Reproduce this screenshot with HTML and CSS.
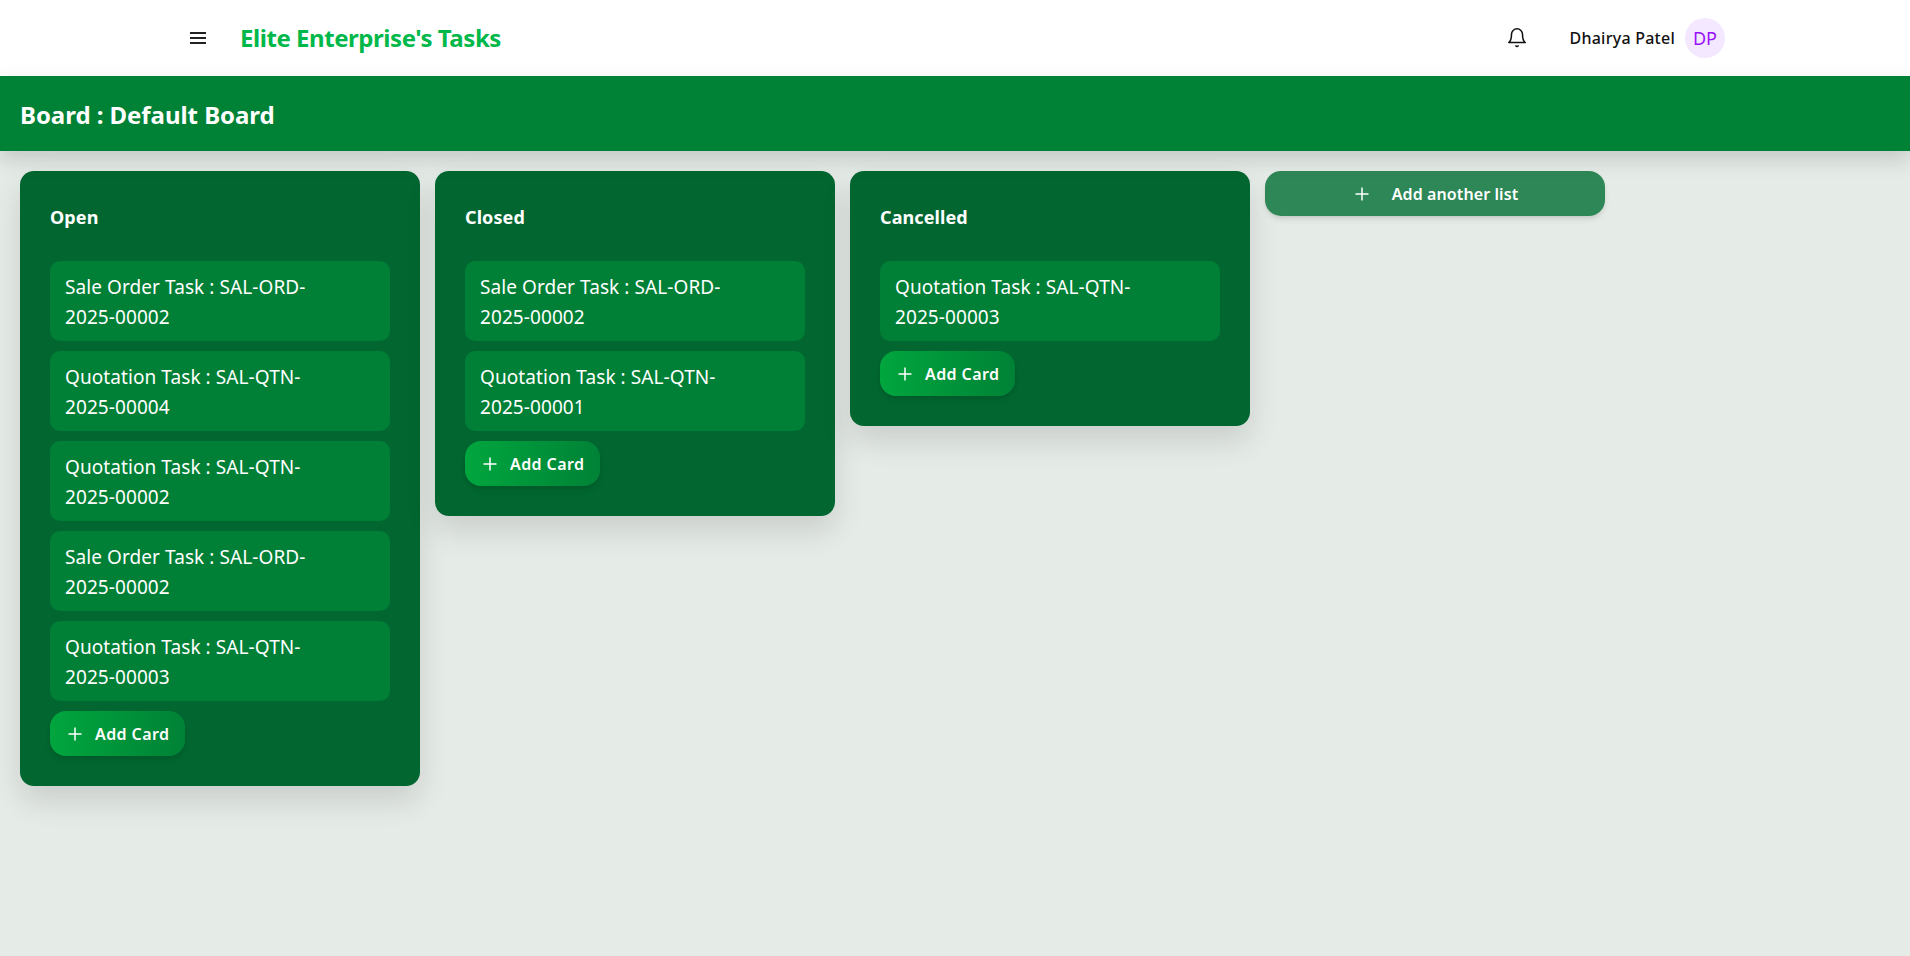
FILE: index.html
```html
<!DOCTYPE html>
<html lang="en">
<head>
<meta charset="utf-8">
<title>Elite Enterprise's Tasks</title>
<link rel="stylesheet" href="styles.css">
</head>
<body>
<header class="topbar">
  <div class="topbar-left">
    <button class="icon-btn" aria-label="Menu">
      <svg width="24" height="24" viewBox="0 0 24 24" fill="none" stroke="#222" stroke-width="2"><path d="M4 7h16M4 12h16M4 17h16"/></svg>
    </button>
    <h1 class="brand">Elite Enterprise's Tasks</h1>
  </div>
  <div class="topbar-right">
    <button class="icon-btn bell" aria-label="Notifications">
      <svg width="22" height="22" viewBox="0 0 24 24" fill="none" stroke="#111" stroke-width="1.7" stroke-linecap="round" stroke-linejoin="round"><path d="M6 8a6 6 0 0 1 12 0c0 7 3 9 3 9H3s3-2 3-9"/><path d="M10.8 20.6a1.4 1.4 0 0 0 2.4 0"/></svg>
    </button>
    <span class="user-name">Dhairya Patel</span>
    <span class="avatar">DP</span>
  </div>
</header>
<div class="board-bar"><h2 class="board-title">Board : Default Board</h2></div>
<main class="board">
  <section class="list">
    <h3 class="list-title">Open</h3>
    <div class="card">Sale Order Task : SAL-ORD-<span class="doc-no">2025-00002</span></div>
    <div class="card">Quotation Task : SAL-QTN-<span class="doc-no">2025-00004</span></div>
    <div class="card">Quotation Task : SAL-QTN-<span class="doc-no">2025-00002</span></div>
    <div class="card">Sale Order Task : SAL-ORD-<span class="doc-no">2025-00002</span></div>
    <div class="card">Quotation Task : SAL-QTN-<span class="doc-no">2025-00003</span></div>
    <button class="add-card"><svg class="plus" width="20" height="20" viewBox="0 0 20 20" fill="none" stroke="#fff" stroke-width="1.5"><path d="M10 3.5v13M3.5 10h13"/></svg>Add Card</button>
  </section>
  <section class="list">
    <h3 class="list-title">Closed</h3>
    <div class="card">Sale Order Task : SAL-ORD-<span class="doc-no">2025-00002</span></div>
    <div class="card">Quotation Task : SAL-QTN-<span class="doc-no">2025-00001</span></div>
    <button class="add-card"><svg class="plus" width="20" height="20" viewBox="0 0 20 20" fill="none" stroke="#fff" stroke-width="1.5"><path d="M10 3.5v13M3.5 10h13"/></svg>Add Card</button>
  </section>
  <section class="list">
    <h3 class="list-title">Cancelled</h3>
    <div class="card">Quotation Task : SAL-QTN-<span class="doc-no">2025-00003</span></div>
    <button class="add-card"><svg class="plus" width="20" height="20" viewBox="0 0 20 20" fill="none" stroke="#fff" stroke-width="1.5"><path d="M10 3.5v13M3.5 10h13"/></svg>Add Card</button>
  </section>
  <button class="add-list"><svg class="plus" width="20" height="20" viewBox="0 0 20 20" fill="none" stroke="#fff" stroke-width="1.5"><path d="M10 3.5v13M3.5 10h13"/></svg>Add another list</button>
</main>
</body>
</html>
```
FILE: styles.css
```css
* { box-sizing: border-box; }
html, body { margin: 0; padding: 0; height: 100%; }
body {
  font-family: "Noto Sans", "Open Sans", sans-serif;
  background: #e5ebe7;
  color: #111;
  overflow: hidden;
}
button { font: inherit; border: 0; background: none; padding: 0; cursor: pointer; }
h1, h2, h3 { margin: 0; }

.topbar {
  height: 76px;
  background: #fff;
  display: flex;
  align-items: center;
  justify-content: space-between;
  padding: 0 185px 0 186px;
}
.topbar-left { display: flex; align-items: center; gap: 30px; }
.topbar-right { display: flex; align-items: center; }
.icon-btn { display: flex; width: 24px; height: 24px; align-items: center; justify-content: center; }
.bell { margin-right: 40px; }
.brand { font-size: 24px; line-height: 32px; font-weight: 700; color: #00b84a; letter-spacing: -0.45px; }
.user-name { font-size: 16px; font-weight: 500; color: #111; letter-spacing: 0.25px; }
.avatar {
  width: 40px; height: 40px; margin-left: 10px;
  border-radius: 50%;
  background: #f3e8ff;
  color: #9810fa;
  display: flex; align-items: center; justify-content: center;
  font-size: 18px;
}

.board-bar {
  height: 75px;
  background: #008236;
  display: flex;
  align-items: center;
  padding: 2px 20px 0;
  box-shadow: 0 8px 20px rgba(0,0,0,.15);
  position: relative;
}
.board-title { font-size: 24px; font-weight: 700; color: #fff; letter-spacing: -0.05px; }

.board {
  display: flex;
  align-items: flex-start;
  gap: 15px;
  padding: 20px;
}
.list {
  width: 400px;
  background: #016630;
  border-radius: 14px;
  padding: 30px;
  display: flex;
  flex-direction: column;
  align-items: flex-start;
  gap: 10px;
  box-shadow: 0 15px 30px rgba(0,0,0,.12);
}
.list-title {
  font-size: 18px; line-height: 32px; font-weight: 700; color: #fff;
  letter-spacing: 0.1px;
  margin-bottom: 18px;
}
.card {
  width: 100%;
  background: #007f36;
  border-radius: 10px;
  padding: 11px 15px 9px;
  font-size: 19px;
  line-height: 30px;
  color: #fff;
  letter-spacing: 0.08px;
}
.doc-no { white-space: nowrap; }
.add-card {
  width: 135px;
  height: 45px;
  padding: 0 15px;
  border-radius: 16px;
  background: linear-gradient(to right, #00a63e, #008236);
  color: #fff;
  font-size: 16px; font-weight: 600;
  letter-spacing: 0.4px;
  display: flex; align-items: center; gap: 10px;
  box-shadow: 0 4px 6px -1px rgba(0,0,0,.1), 0 2px 4px -2px rgba(0,0,0,.1);
}
.add-list {
  width: 340px; height: 45px;
  border-radius: 16px;
  background: rgba(0,110,50,.8);
  color: #fff;
  font-size: 16px; font-weight: 600;
  letter-spacing: 0.1px;
  display: flex; align-items: center; justify-content: center; gap: 20px;
  box-shadow: 0 4px 6px -1px rgba(0,0,0,.1), 0 2px 4px -2px rgba(0,0,0,.1);
}
```
